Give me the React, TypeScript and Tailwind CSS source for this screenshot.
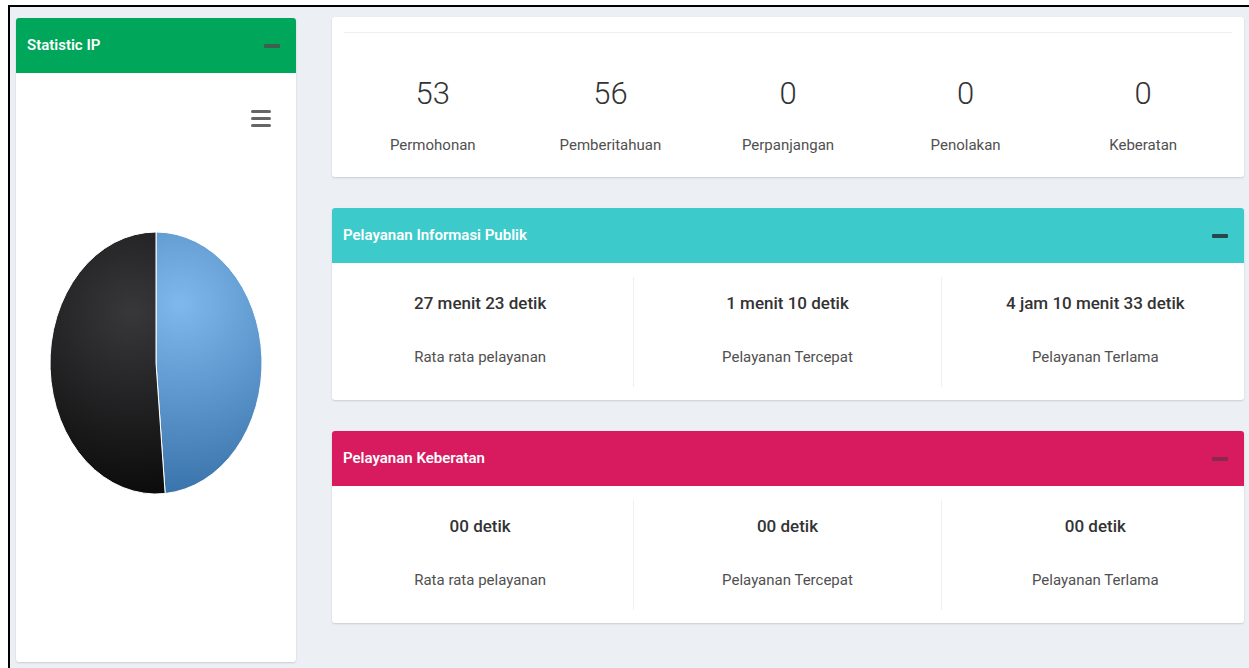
import React from 'react';

type Stat = { value: string; label: string };

const counts: Stat[] = [
  { value: '53', label: 'Permohonan' },
  { value: '56', label: 'Pemberitahuan' },
  { value: '0', label: 'Perpanjangan' },
  { value: '0', label: 'Penolakan' },
  { value: '0', label: 'Keberatan' },
];

const publik: Stat[] = [
  { value: '27 menit 23 detik', label: 'Rata rata pelayanan' },
  { value: '1 menit 10 detik', label: 'Pelayanan Tercepat' },
  { value: '4 jam 10 menit 33 detik', label: 'Pelayanan Terlama' },
];

const keberatan: Stat[] = [
  { value: '00 detik', label: 'Rata rata pelayanan' },
  { value: '00 detik', label: 'Pelayanan Tercepat' },
  { value: '00 detik', label: 'Pelayanan Terlama' },
];

// collapse button on box headers
const Minus = ({ tone }: { tone: string }) => (
  <span className={`block w-[16px] h-[4px] rounded-[1px] ${tone}`} />
);

const Hamburger = () => (
  <div className="flex flex-col gap-[4px]">
    <span className="block w-[20px] h-[3px] rounded-full bg-[#666]" />
    <span className="block w-[20px] h-[3px] rounded-full bg-[#666]" />
    <span className="block w-[20px] h-[3px] rounded-full bg-[#666]" />
  </div>
);

// pie: blue = 53, black = 56, starting at 12 o'clock
const PieChart = () => {
  const rx = 106;
  const ry = 131;
  const total = 53 + 56;
  const share = 53 / total;
  const a = share * Math.PI * 2;
  const ex = rx + rx * Math.sin(a);
  const ey = ry - ry * Math.cos(a);
  const bigBlue = share > 0.5 ? 1 : 0;
  const bigBlack = share > 0.5 ? 0 : 1;
  return (
    <svg width="212" height="262" viewBox="0 0 212 262">
      <defs>
        <radialGradient id="blueSlice" gradientUnits="userSpaceOnUse" cx="130" cy="72" r="200">
          <stop offset="0" stopColor="#7eb8ec" />
          <stop offset="1" stopColor="#3670a8" />
        </radialGradient>
        <radialGradient id="blackSlice" gradientUnits="userSpaceOnUse" cx="82" cy="80" r="190">
          <stop offset="0" stopColor="#38383b" />
          <stop offset="1" stopColor="#0a0a0a" />
        </radialGradient>
      </defs>
      <path
        d={`M${rx},${ry} L${rx},0 A${rx},${ry} 0 ${bigBlue},1 ${ex},${ey} Z`}
        fill="url(#blueSlice)"
        stroke="#fff"
        strokeWidth="1"
      />
      <path
        d={`M${rx},${ry} L${ex},${ey} A${rx},${ry} 0 ${bigBlack},1 ${rx},0 Z`}
        fill="url(#blackSlice)"
        stroke="#fff"
        strokeWidth="1"
      />
    </svg>
  );
};

const TimeBox = ({ title, header, minus, items }: { title: string; header: string; minus: string; items: Stat[] }) => (
  <div className="bg-white rounded-[3px] shadow-[0_1px_2px_rgba(0,0,0,0.15)]">
    <div className={`h-[55px] px-[11px] pr-[16px] flex items-center justify-between rounded-t-[3px] ${header}`}>
      <h3 className="text-white text-[15px] font-semibold">{title}</h3>
      <Minus tone={minus} />
    </div>
    <div className="px-[10px] pt-[14px] pb-[13px]">
      <div className="grid grid-cols-3 -mx-[15px]">
        {items.map((it, i) => (
          <div
            key={i}
            className={`h-[110px] pt-[14px] flex flex-col items-center ${i < 2 ? 'border-r border-[#f0f0f0]' : ''}`}
          >
            <span className="text-[17px] leading-[24px] font-medium text-[#333]">{it.value}</span>
            <span className="mt-[32px] text-[15px] leading-[20px] text-[#505050]">{it.label}</span>
          </div>
        ))}
      </div>
    </div>
  </div>
);

const App = () => {
  return (
    <div className="h-screen bg-white pt-[5px] pl-[8px] font-['Roboto','Liberation_Sans',sans-serif]">
      <div className="h-full border-t-2 border-l-2 border-black bg-[#ecf0f5] pl-[6px] pt-[11px] flex gap-[36px]">
        {/* Statistic IP */}
        <div className="w-[280px] h-[644px] bg-white rounded-[3px] shadow-[0_1px_2px_rgba(0,0,0,0.15)] flex flex-col">
          <div className="h-[55px] px-[11px] pr-[16px] flex items-center justify-between bg-[#00a65a] rounded-t-[3px]">
            <h3 className="text-white text-[15px] font-semibold">Statistic IP</h3>
            <Minus tone="bg-[#3f5f4d]" />
          </div>
          <div className="flex justify-end pr-[25px] pt-[37px]">
            <Hamburger />
          </div>
          <div className="flex justify-center mt-[105px]">
            <PieChart />
          </div>
        </div>

        {/* right column */}
        <div className="w-[912px] -mt-[1px] flex flex-col gap-[31px]">
          <div className="bg-white rounded-[3px] shadow-[0_1px_2px_rgba(0,0,0,0.15)] pt-[15px]">
            <div className="mx-[12px] border-t border-[#f0f0f0] grid grid-cols-5 pt-[43px] pb-[22px]">
              {counts.map((c) => (
                <div key={c.label} className="flex flex-col items-center">
                  <span className="text-[31px] leading-[36px] font-light text-[#333]">{c.value}</span>
                  <span className="mt-[23px] text-[15px] leading-[20px] text-[#505050]">{c.label}</span>
                </div>
              ))}
            </div>
          </div>

          <TimeBox
            title="Pelayanan Informasi Publik"
            header="bg-[#3ccbca]"
            minus="bg-[#264848]"
            items={publik}
          />
          <TimeBox
            title="Pelayanan Keberatan"
            header="bg-[#d81b5e]"
            minus="bg-[#8a2a4a]"
            items={keberatan}
          />
        </div>
      </div>
    </div>
  );
};

export default App;
